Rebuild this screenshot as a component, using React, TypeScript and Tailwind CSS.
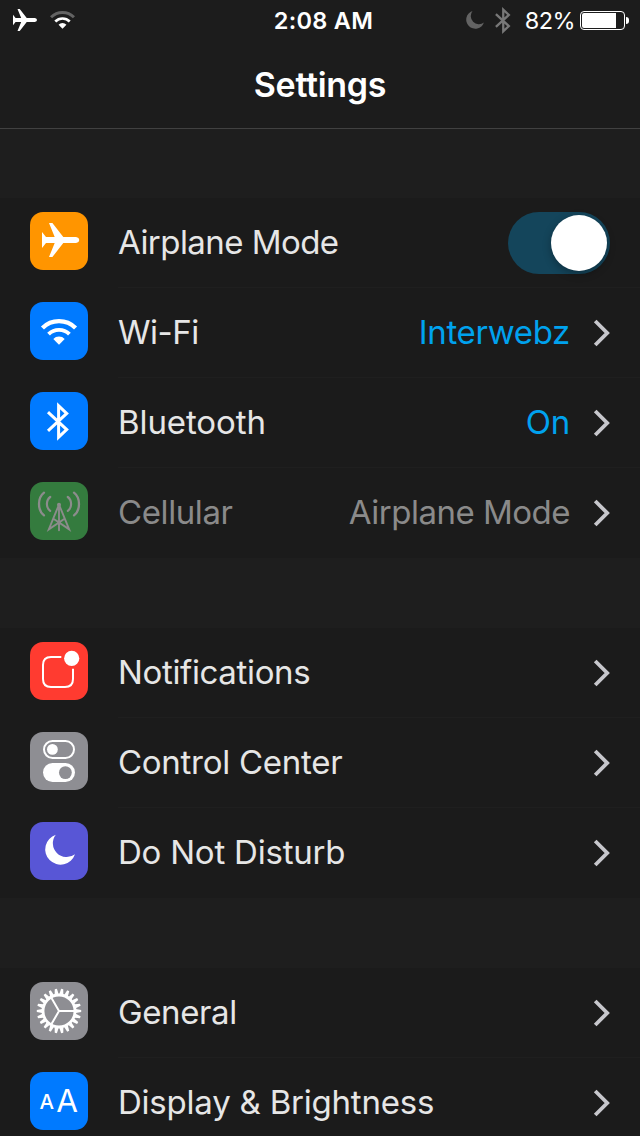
import type { ReactNode } from 'react'

interface RowItem {
  label: string
  icon: ReactNode
  tile: string
  tracking: string
  value?: string
  valueClass?: string
  dimmed?: boolean
  toggle?: boolean
}

const PLANE = 'M12 20L16 25H24.7L19 11H22.4L33.3 25H46Q49.2 25.6 49.2 28T46 31H33.3L22.4 45H19L24.7 31H16L12 36Z'
const MOON = 'M25.8 12.8A15.3 15.3 0 1 0 45 32.3A13.8 13.8 0 0 1 25.8 12.8Z'
const BLUETOOTH = 'M18 20.2L36.7 37.6L28.6 45.2V13.8L36.7 21.4L18 38.8'

function WifiShape({ outer = '#fff' }: { outer?: string }) {
  return (
    <>
      <path d="M12.45 26.05A23.4 23.4 0 0 1 45.55 26.05" fill="none" stroke={outer} strokeWidth="4.3" />
      <path d="M18.57 32.17A14.75 14.75 0 0 1 39.43 32.17" fill="none" stroke="#fff" strokeWidth="3.9" />
      <path d="M29 42.7L23.3 36.9A8 8 0 0 1 34.7 36.9Z" fill="#fff" />
    </>
  )
}

function CellularIcon() {
  return (
    <g fill="none" stroke="#8c8c8c" strokeLinecap="round">
      <path d="M14 10.6Q9 14.5 9 22T14 33.4M44 10.6Q49 14.5 49 22T44 33.4" strokeWidth="2.3" />
      <path d="M20.2 15Q16.9 17.5 16.9 22T20.2 28.8M37.8 15Q41.1 17.5 41.1 22T37.8 28.8" strokeWidth="2.2" />
      <path d="M29 24V48.2M28.4 24L18.8 47.4L33.8 37.3M29.6 24L39.2 47.4L24.2 37.3" strokeWidth="1.9" />
      <circle cx="29" cy="22.8" r="2" fill="#8c8c8c" stroke="none" />
    </g>
  )
}

function GearIcon() {
  const teeth = Array.from({ length: 22 }, (_, i) => (i * 360) / 22)
  return (
    <g stroke="#fff" fill="none">
      <circle cx="29" cy="29" r="16" strokeWidth="2.8" />
      {teeth.map(a => (
        <path key={a} d="M45.8 27L51.2 27.9V30.1L45.8 31Z" fill="#fff" stroke="none" transform={`rotate(${a} 29 29)`} />
      ))}
      <path d="M29 29H44M29 29L21.5 16M29 29L21.5 42" strokeWidth="2" />
    </g>
  )
}

const groups: RowItem[][] = [
  [
    { label: 'Airplane Mode', tile: 'bg-[#ff9500]', tracking: 'tracking-[-0.55px]', toggle: true, icon: <path d={PLANE} fill="#fff" /> },
    { label: 'Wi-Fi', tile: 'bg-[#007aff]', tracking: 'tracking-[-0.5px]', value: 'Interwebz', valueClass: 'text-[#00a2ee] tracking-[-0.35px]', icon: <WifiShape /> },
    {
      label: 'Bluetooth',
      tile: 'bg-[#007aff]',
      tracking: 'tracking-[-0.1px]',
      value: 'On',
      valueClass: 'text-[#00a2ee] tracking-[-0.2px]',
      icon: <path d={BLUETOOTH} fill="none" stroke="#fff" strokeWidth="3" />,
    },
    { label: 'Cellular', tile: 'bg-[#347b3e]', tracking: 'tracking-[-0.4px]', value: 'Airplane Mode', valueClass: 'text-[#8a8a8a] tracking-[-0.5px]', dimmed: true, icon: <CellularIcon /> },
  ],
  [
    {
      label: 'Notifications',
      tile: 'bg-[#ff3b30]',
      tracking: 'tracking-[-0.35px]',
      icon: (
        <>
          <path d="M31.3 15H21Q13 15 13 23V37Q13 45 21 45H35Q43 45 43 37V26.8" fill="none" stroke="#fff" strokeWidth="2" />
          <circle cx="41.7" cy="16.4" r="7.6" fill="#fff" />
        </>
      ),
    },
    {
      label: 'Control Center',
      tile: 'bg-[#8e8e93]',
      tracking: 'tracking-[-0.27px]',
      icon: (
        <>
          <rect x="14" y="9" width="30" height="17" rx="8.5" fill="none" stroke="#fff" strokeWidth="2" />
          <circle cx="22.4" cy="17.4" r="5.4" fill="#fff" />
          <rect x="13" y="31" width="32" height="19" rx="9.5" fill="#fff" />
          <circle cx="35.4" cy="40.6" r="6.4" fill="#8e8e93" />
        </>
      ),
    },
    { label: 'Do Not Disturb', tile: 'bg-[#5856d6]', tracking: 'tracking-[-0.22px]', icon: <path d={MOON} fill="#fff" /> },
  ],
  [
    { label: 'General', tile: 'bg-[#8e8e93]', tracking: 'tracking-[-0.4px]', icon: <GearIcon /> },
    {
      label: 'Display & Brightness',
      tile: 'bg-[#007aff]',
      tracking: 'tracking-[-0.22px]',
      icon: (
        <g fill="#fff">
          <text x="9.6" y="36.8" fontSize="20.5" fontWeight="500">A</text>
          <text x="26.2" y="40" fontSize="31.5" fontWeight="400">A</text>
        </g>
      ),
    },
  ],
]

function StatusBar() {
  return (
    <div className="grid h-10 grid-cols-[1fr_auto_1fr] items-center pr-[11px] pl-[13px] text-white">
      <div className="flex items-center gap-[13px]">
        <svg className="h-[22px] w-[24px]" viewBox="12 11 37.2 34"><path d={PLANE} fill="#fff" /></svg>
        <svg className="h-[18px] w-[25px]" viewBox="11 17 36 26"><WifiShape outer="#636363" /></svg>
      </div>
      <span className="pt-px pl-[5px] text-[23.5px] leading-[39px] font-semibold tracking-[0.3px]">2:08 AM</span>
      <div className="flex items-center justify-end">
        <svg className="mr-[11px] h-[18px] w-[18px]" viewBox="15 12.8 30 30.3"><path d={MOON} fill="#636363" /></svg>
        <svg className="mr-[14px] h-[27px] w-[16px]" viewBox="17 10 22.5 39">
          <path d={BLUETOOTH} fill="none" stroke="#787878" strokeWidth="3.3" />
        </svg>
        <span className="mr-[5px] pt-px text-[23.5px] leading-[39px] tracking-[-0.6px]">82%</span>
        <div className="flex items-center gap-px">
          <div className="h-[19px] w-[45px] rounded-[4px] border border-white p-px">
            <div className="h-full w-[34px] rounded-l-[2px] bg-white" />
          </div>
          <div className="h-[7px] w-[3px] rounded-r-full bg-white" />
        </div>
      </div>
    </div>
  )
}

function Toggle() {
  return (
    <div className="flex h-[62px] w-[102px] items-center justify-end rounded-full bg-[#14455b] pr-[3px]">
      <div className="size-[56px] rounded-full bg-white shadow-[0_3px_8px_rgba(0,0,0,0.3)]" />
    </div>
  )
}

function Row({ item, last }: { item: RowItem; last: boolean }) {
  return (
    <div className="flex h-[90px] pl-[30px]">
      <div className={`mt-[14px] size-[58px] shrink-0 overflow-hidden rounded-[13px] ${item.tile}`}>
        <svg className="size-full" viewBox="0 0 58 58">{item.icon}</svg>
      </div>
      <div className={`ml-[30px] flex flex-1 items-center border-b pr-[30px] ${last ? 'border-transparent' : 'border-[#1f1f1f]'}`}>
        <span className={`flex-1 pt-px text-[33px] whitespace-nowrap ${item.tracking} ${item.dimmed ? 'text-[#8a8a8a]' : 'text-[#e6e6e6]'}`}>
          {item.label}
        </span>
        {item.value && <span className={`pt-px text-[33px] ${item.valueClass}`}>{item.value}</span>}
        {item.toggle ? (
          <Toggle />
        ) : (
          <svg className="mt-px ml-[22px] h-[28px] w-[18px]" viewBox="0 0 18 28">
            <path d="M3.2 2L15.2 14L3.2 26" fill="none" stroke="#c7c7cc" strokeWidth="3.8" />
          </svg>
        )}
      </div>
    </div>
  )
}

function App() {
  return (
    <div className="h-[1136px] w-[640px] overflow-hidden bg-[#1e1e1e] font-['Inter',sans-serif] font-normal">
      <header className="h-[129px] border-b border-[#414141] bg-[#1c1c1c]">
        <StatusBar />
        <h1 className="text-center text-[34px] leading-[89px] font-semibold tracking-[-0.3px] text-white">Settings</h1>
      </header>
      <main className="flex flex-col gap-[70px] pt-[69px]">
        {groups.map((rows, g) => (
          <section key={g} className="bg-[#1b1b1b]">
            {rows.map((item, i) => (
              <Row key={item.label} item={item} last={i === rows.length - 1} />
            ))}
          </section>
        ))}
      </main>
    </div>
  )
}

export default App
